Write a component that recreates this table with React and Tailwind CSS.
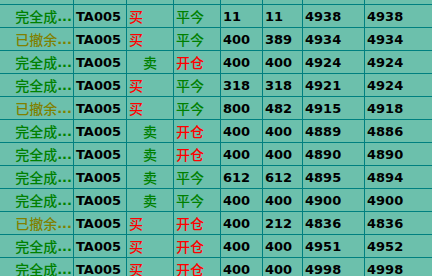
const rows = [
  ['完全成', '买', '平今', '11', '11', '4938', '4938'],
  ['已撤余', '买', '平今', '400', '389', '4934', '4934'],
  ['完全成', '卖', '开仓', '400', '400', '4924', '4924'],
  ['完全成', '买', '平今', '318', '318', '4921', '4924'],
  ['已撤余', '买', '平今', '800', '482', '4915', '4918'],
  ['完全成', '卖', '开仓', '400', '400', '4889', '4886'],
  ['完全成', '卖', '开仓', '400', '400', '4890', '4890'],
  ['完全成', '卖', '平今', '612', '612', '4895', '4894'],
  ['完全成', '卖', '平今', '400', '400', '4900', '4900'],
  ['已撤余', '买', '开仓', '400', '212', '4836', '4836'],
  ['完全成', '买', '开仓', '400', '400', '4951', '4952'],
  ['完全成', '买', '开仓', '400', '400', '4998', '4998'],
];

const cjk = { fontFamily: '"Noto Sans CJK SC", "DejaVu Sans", sans-serif' };

const Row = ({ r }) => {
  const [status, side, offset, qty, filled, price, avg] = r;
  const cancelled = status.startsWith('已撤');
  return (
    <div className="flex h-[23px] border-b border-[#008080] items-center text-[13px] leading-none">
      <div
        className={`w-[74px] h-full border-r border-[#008080] flex items-center justify-end pr-[1px] ${cancelled ? 'text-[#808000]' : 'text-[#008000]'}`}
      >
        <span style={cjk} className="text-[14px] font-medium">{status}</span>
        <span className="font-bold">...</span>
      </div>
      <div className="w-[53px] h-full border-r border-[#008080] flex items-center pl-[2px] font-bold text-black">TA005</div>
      <div
        style={cjk}
        className={`w-[47px] h-full border-r border-[#008080] flex items-center text-[14px] font-medium ${side === '买' ? 'pl-[2px] text-[#ff0000]' : 'justify-center text-[#008000]'}`}
      >
        {side}
      </div>
      <div
        style={cjk}
        className={`w-[47px] h-full border-r border-[#008080] flex items-center pl-[2px] text-[14px] font-medium ${offset === '开仓' ? 'text-[#ff0000]' : 'text-[#008000]'}`}
      >
        {offset}
      </div>
      <div className="w-[42px] h-full border-r border-[#008080] flex items-center pl-[2px] font-bold text-black">{qty}</div>
      <div className="w-[40px] h-full border-r border-[#008080] flex items-center pl-[2px] font-bold text-black">{filled}</div>
      <div className="w-[62px] h-full border-r border-[#008080] flex items-center pl-[2px] font-bold text-black">{price}</div>
      <div className="flex-1 h-full flex items-center pl-[2px] font-bold text-black">{avg}</div>
    </div>
  );
};

export default function App() {
  return (
    <div
      className="w-[432px] h-[276px] overflow-hidden bg-[#6cc0ac]"
      style={{ fontFamily: '"DejaVu Sans", "Noto Sans CJK SC", sans-serif' }}
    >
      <div className="flex h-[5px] border-b border-[#008080]">
        <div className="w-[74px] border-r border-[#008080]" />
        <div className="w-[53px] border-r border-[#008080]" />
        <div className="w-[47px] border-r border-[#008080]" />
        <div className="w-[47px] border-r border-[#008080]" />
        <div className="w-[42px] border-r border-[#008080]" />
        <div className="w-[40px] border-r border-[#008080]" />
        <div className="w-[62px] border-r border-[#008080]" />
        <div className="flex-1" />
      </div>
      {rows.map((r, i) => (
        <Row key={i} r={r} />
      ))}
    </div>
  );
}
